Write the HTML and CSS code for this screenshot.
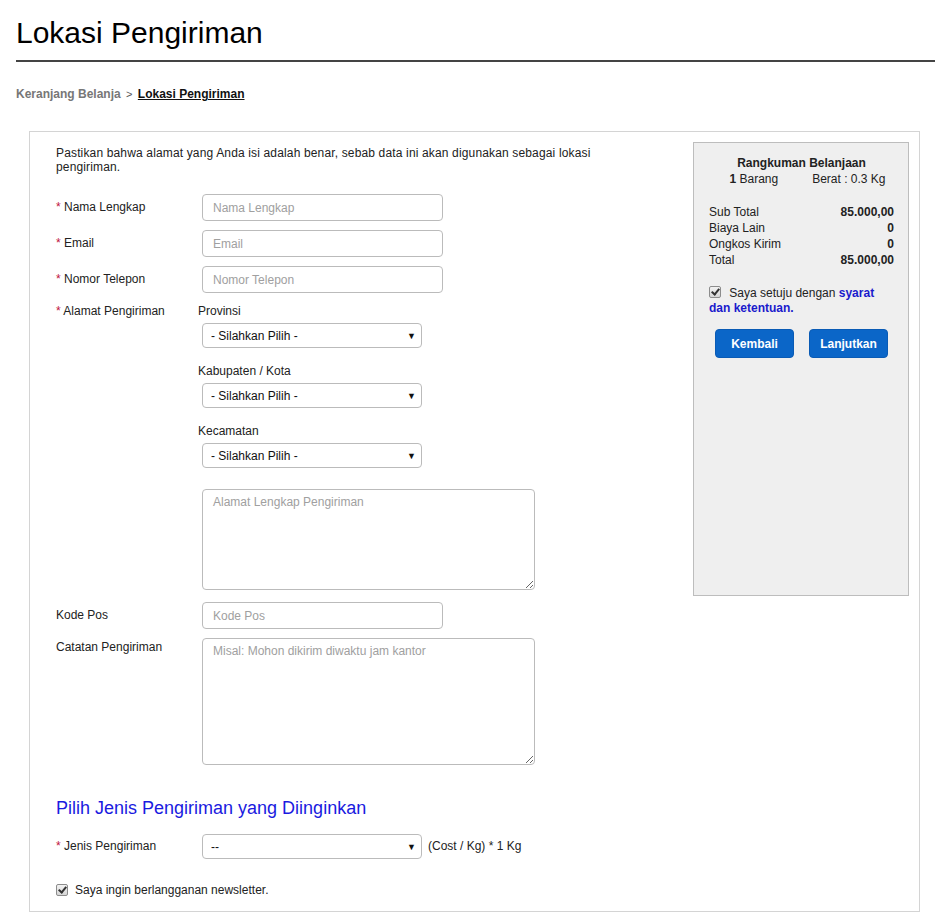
FILE: index.html
```html
<!DOCTYPE html>
<html lang="id">
<head>
    <meta charset="UTF-8">
    <meta name="viewport" content="width=device-width, initial-scale=1.0">
    <title>Lokasi Pengiriman</title>
    <link rel="stylesheet" href="styles.css">
</head>
<body>
    <h1 class="page-title">Lokasi Pengiriman</h1>

    <div class="breadcrumb">
        <a href="#" class="crumb">Keranjang Belanja</a>
        <span class="sep">&gt;</span>
        <a href="#" class="crumb current">Lokasi Pengiriman</a>
    </div>

    <div class="checkout-box">
        <form class="ship-form">
            <p class="intro">Pastikan bahwa alamat yang Anda isi adalah benar, sebab data ini akan digunakan sebagai lokasi pengiriman.</p>

            <div class="row">
                <label class="field-label"><span class="req">*</span> Nama Lengkap</label>
                <input type="text" class="text-input" placeholder="Nama Lengkap">
            </div>
            <div class="row">
                <label class="field-label"><span class="req">*</span> Email</label>
                <input type="text" class="text-input" placeholder="Email">
            </div>
            <div class="row">
                <label class="field-label"><span class="req">*</span> Nomor Telepon</label>
                <input type="text" class="text-input" placeholder="Nomor Telepon">
            </div>

            <div class="row address-row">
                <label class="field-label top"><span class="req">*</span> Alamat Pengiriman</label>
                <div class="field-col">
                    <div class="sub-label first">Provinsi</div>
                    <div class="select-wrap"><select class="select-input"><option>- Silahkan Pilih -</option></select></div>

                    <div class="sub-label">Kabupaten / Kota</div>
                    <div class="select-wrap"><select class="select-input"><option>- Silahkan Pilih -</option></select></div>

                    <div class="sub-label">Kecamatan</div>
                    <div class="select-wrap"><select class="select-input"><option>- Silahkan Pilih -</option></select></div>

                    <textarea class="text-area address" placeholder="Alamat Lengkap Pengiriman"></textarea>
                </div>
            </div>

            <div class="row postal-row">
                <label class="field-label">Kode Pos</label>
                <input type="text" class="text-input" placeholder="Kode Pos">
            </div>
            <div class="row">
                <label class="field-label top">Catatan Pengiriman</label>
                <textarea class="text-area notes" placeholder="Misal: Mohon dikirim diwaktu jam kantor"></textarea>
            </div>

            <h2 class="section-title">Pilih Jenis Pengiriman yang Diinginkan</h2>

            <div class="row courier-row">
                <label class="field-label"><span class="req">*</span> Jenis Pengiriman</label>
                <div class="select-wrap"><select class="select-input"><option>--</option></select></div>
                <span class="cost-note">(Cost / Kg) * 1 Kg</span>
            </div>

            <label class="check-line newsletter">
                <input type="checkbox" class="check" checked>
                Saya ingin berlangganan newsletter.
            </label>
        </form>

        <aside class="summary">
            <div class="summary-title">Rangkuman Belanjaan</div>
            <div class="summary-meta">
                <span><b>1</b> Barang</span>
                <span>Berat : 0.3 Kg</span>
            </div>

            <div class="totals">
                <div class="total-row"><span>Sub Total</span><b>85.000,00</b></div>
                <div class="total-row"><span>Biaya Lain</span><b>0</b></div>
                <div class="total-row"><span>Ongkos Kirim</span><b>0</b></div>
                <div class="total-row"><span>Total</span><b>85.000,00</b></div>
            </div>

            <div class="agree">
                <input type="checkbox" class="check" checked>
                <span class="agree-text">Saya setuju dengan <a href="#" class="terms">syarat dan ketentuan.</a></span>
            </div>

            <div class="actions">
                <button type="button" class="btn">Kembali</button>
                <button type="button" class="btn">Lanjutkan</button>
            </div>
        </aside>
    </div>
</body>
</html>
```

FILE: styles.css
```css
body {
    font-family: 'Liberation Sans', Arial, sans-serif;
    font-size: 12px;
    color: #222;
    margin: 0;
    padding: 0 16px;
    background: #fff;
}

.page-title {
    font-size: 30px;
    font-weight: normal;
    color: #000;
    margin: 0;
    padding: 15px 0 10px;
    line-height: 35px;
    border-bottom: 2px solid #444;
}

.breadcrumb {
    margin-top: 24px;
    font-weight: bold;
    line-height: 16px;
}

.breadcrumb .crumb {
    color: #777;
    text-decoration: none;
}

.breadcrumb .crumb.current {
    color: #111;
    text-decoration: underline;
}

.breadcrumb .sep {
    color: #555;
    font-weight: normal;
    margin: 0 2px;
    font-size: 11px;
}

.checkout-box {
    display: flex;
    align-items: flex-start;
    margin: 29px 15px 0 13px;
    border: 1px solid #d4d4d4;
}

/* form column */
.ship-form {
    flex: 1;
    padding: 14px 0 12px 26px;
}

.intro {
    margin: 0 0 20px;
    max-width: 575px;
    line-height: 14px;
    letter-spacing: 0.15px;
}

.row {
    display: flex;
    align-items: flex-start;
    margin-bottom: 9px;
}

.field-label {
    width: 142px;
    flex-shrink: 0;
    line-height: 27px;
}

.field-label.top {
    line-height: 18px;
}

.req {
    color: #c0143c;
}

.text-input {
    width: 241px;
    height: 27px;
    box-sizing: border-box;
    margin-left: 4px;
    padding: 0 10px;
    border: 1px solid #bbb;
    border-radius: 4px;
    font: inherit;
    color: #222;
}

.text-input::placeholder,
.text-area::placeholder {
    color: #a0a0a0;
}

.field-col {
    display: flex;
    flex-direction: column;
    align-items: flex-start;
}

.sub-label {
    line-height: 18px;
    margin: 14px 0 3px;
}

.sub-label.first {
    margin-top: 0;
}

.select-wrap {
    position: relative;
    margin-left: 4px;
}

.select-wrap::after {
    content: "\25BC";
    position: absolute;
    right: 6px;
    top: 8px;
    font-size: 9px;
    color: #111;
    pointer-events: none;
}

.select-input {
    appearance: none;
    -webkit-appearance: none;
    width: 220px;
    height: 25px;
    box-sizing: border-box;
    padding: 0 8px;
    border: 1px solid #bbb;
    border-radius: 4px;
    background: #fff;
    font: inherit;
    color: #111;
}

.text-area {
    width: 333px;
    box-sizing: border-box;
    margin-left: 4px;
    padding: 5px 10px;
    border: 1px solid #bbb;
    border-radius: 4px;
    font: inherit;
    resize: both;
}

.text-area.address {
    height: 101px;
    margin-top: 21px;
}

.text-area.notes {
    height: 127px;
}

.address-row {
    margin-bottom: 12px;
}

.section-title {
    font-size: 18px;
    font-weight: normal;
    color: #1a1ae0;
    line-height: 22px;
    margin: 32px 0 15px;
}

.courier-row {
    margin-bottom: 0;
}

.courier-row .field-label {
    line-height: 25px;
}

.cost-note {
    line-height: 25px;
    margin-left: 6px;
}

.check-line {
    display: flex;
    align-items: center;
    margin-top: 22px;
    line-height: 18px;
}

.check {
    appearance: none;
    -webkit-appearance: none;
    position: relative;
    flex-shrink: 0;
    width: 12px;
    height: 12px;
    margin: 0 7px 0 0;
    border: 1px solid #8c8c8c;
    border-radius: 2px;
    background: linear-gradient(#f2f2f2, #d6d6d6);
    box-sizing: border-box;
    vertical-align: -1px;
}

.check:checked::after {
    content: "";
    position: absolute;
    left: 3px;
    top: 0px;
    width: 3px;
    height: 6px;
    border: solid #333;
    border-width: 0 2px 2px 0;
    transform: rotate(40deg);
}

/* summary sidebar */
.summary {
    width: 216px;
    height: 454px;
    box-sizing: border-box;
    margin: 10px 10px 0 0;
    padding: 12px 14px 0 15px;
    background: #efefef;
    border: 1px solid #bdbdbd;
    line-height: 16px;
}

.summary-title {
    text-align: center;
    font-weight: bold;
}

.summary-meta {
    display: flex;
    justify-content: center;
    gap: 34px;
    padding-left: 12px;
}

.totals {
    margin-top: 17px;
}

.total-row {
    display: flex;
    justify-content: space-between;
}

.agree {
    margin-top: 18px;
    line-height: 15px;
}

.agree .check {
    margin-right: 5px;
}

.terms {
    color: #1a1acc;
    font-weight: bold;
    text-decoration: none;
}

.actions {
    display: flex;
    justify-content: center;
    gap: 15px;
    margin-top: 13px;
}

.btn {
    width: 79px;
    height: 29px;
    border: 1px solid #0a5bb5;
    border-radius: 4px;
    background: #0b66c8;
    color: #fff;
    font: inherit;
    font-weight: bold;
    cursor: pointer;
}
```
